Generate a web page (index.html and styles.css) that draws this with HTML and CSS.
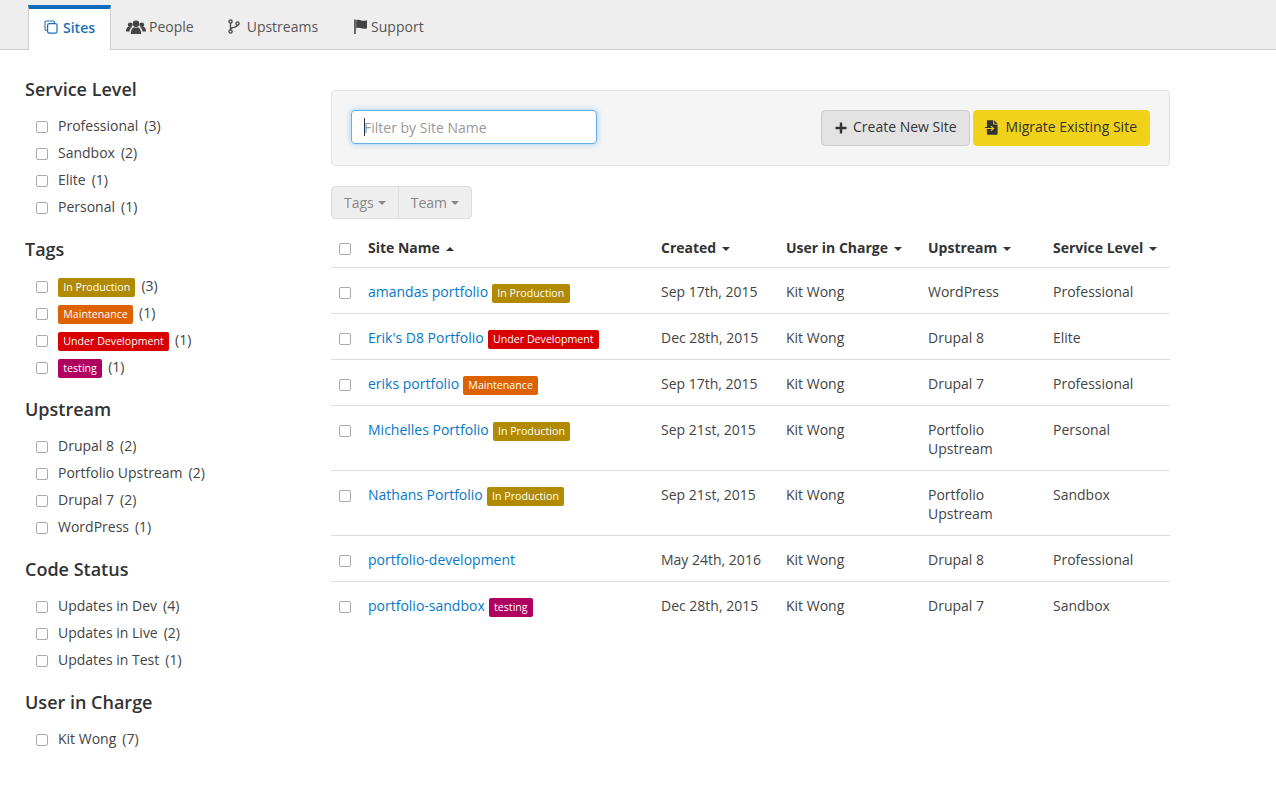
FILE: index.html
```html
<!DOCTYPE html>
<html lang="en">
<head>
<meta charset="utf-8">
<title>Sites</title>
<link rel="stylesheet" href="styles.css">
</head>
<body>
<nav class="tabs">
  <a class="tab active"><svg class="ico" viewBox="0 0 14 14" width="14" height="14"><path d="M3.500 10.500H2.500A1.500 1.500 0 0 1 1 9V2.500A1.500 1.500 0 0 1 2.500 1H9a1.500 1.500 0 0 1 1.500 1.500v1" fill="none" stroke="currentColor" stroke-width="1.100"/><rect x="3.600" y="3.600" width="9.400" height="9.600" rx="1.600" fill="none" stroke="currentColor" stroke-width="1.200"/></svg>Sites</a>
  <a class="tab people"><svg class="ico" viewBox="0 0 20 14" width="20" height="14"><circle cx="10" cy="3.800" r="3.300" fill="currentColor"/><path d="M4.800 14c0-4.500 1.700-6.300 3.500-6.800 1 .6 2.400.6 3.400 0 1.800.5 3.500 2.300 3.500 6.800z" fill="currentColor"/><circle cx="4.200" cy="4.800" r="2.400" fill="currentColor"/><circle cx="15.800" cy="4.800" r="2.400" fill="currentColor"/><path d="M0 11.500c0-3 1-4.300 2.500-4.700.9.500 2.100.5 3 .1l.5.300C4.500 8.300 3.700 9.600 3.500 11.500zM20 11.500c0-3-1-4.300-2.500-4.700-.9.500-2.100.5-3 .1l-.5.300c1.500 1.100 2.300 2.400 2.500 4.300z" fill="currentColor"/></svg>People</a>
  <a class="tab upstreams"><svg class="ico" viewBox="0 0 12 15" width="12" height="15"><circle cx="2.500" cy="2.500" r="1.600" fill="none" stroke="currentColor" stroke-width="1.300"/><circle cx="2.500" cy="12.500" r="1.600" fill="none" stroke="currentColor" stroke-width="1.300"/><circle cx="9.500" cy="4.500" r="1.600" fill="none" stroke="currentColor" stroke-width="1.300"/><path d="M2.500 4.100v6.800M9.500 6.100c0 2.800-7 1.900-7 4.200" fill="none" stroke="currentColor" stroke-width="1.300"/></svg>Upstreams</a>
  <a class="tab support"><svg class="ico" viewBox="0 0 14 15" width="14" height="15"><path d="M1 .5v14.500" stroke="currentColor" stroke-width="1.600" fill="none"/><path d="M2.200 1.200c2-.6 3.600-.4 5 .2s3.700.6 5.800-.2v8c-2.100.8-4.300.7-5.800.1s-3-.7-5-.1z" fill="currentColor"/></svg>Support</a>
</nav>
<div class="page">
  <aside class="side">
    <section class="group">
      <h3>Service Level</h3>
      <label class="opt"><input type="checkbox"><span>Professional</span><span class="n">(3)</span></label>
      <label class="opt"><input type="checkbox"><span>Sandbox</span><span class="n">(2)</span></label>
      <label class="opt"><input type="checkbox"><span>Elite</span><span class="n">(1)</span></label>
      <label class="opt"><input type="checkbox"><span>Personal</span><span class="n">(1)</span></label>
    </section>
    <section class="group">
      <h3>Tags</h3>
      <label class="opt"><input type="checkbox"><span class="tag prod">In Production</span><span class="n">(3)</span></label>
      <label class="opt"><input type="checkbox"><span class="tag maint">Maintenance</span><span class="n">(1)</span></label>
      <label class="opt"><input type="checkbox"><span class="tag dev">Under Development</span><span class="n">(1)</span></label>
      <label class="opt"><input type="checkbox"><span class="tag test">testing</span><span class="n">(1)</span></label>
    </section>
    <section class="group">
      <h3>Upstream</h3>
      <label class="opt"><input type="checkbox"><span>Drupal 8</span><span class="n">(2)</span></label>
      <label class="opt"><input type="checkbox"><span>Portfolio Upstream</span><span class="n">(2)</span></label>
      <label class="opt"><input type="checkbox"><span>Drupal 7</span><span class="n">(2)</span></label>
      <label class="opt"><input type="checkbox"><span>WordPress</span><span class="n">(1)</span></label>
    </section>
    <section class="group">
      <h3>Code Status</h3>
      <label class="opt"><input type="checkbox"><span>Updates in Dev</span><span class="n">(4)</span></label>
      <label class="opt"><input type="checkbox"><span>Updates in Live</span><span class="n">(2)</span></label>
      <label class="opt"><input type="checkbox"><span>Updates in Test</span><span class="n">(1)</span></label>
    </section>
    <section class="group">
      <h3>User in Charge</h3>
      <label class="opt"><input type="checkbox"><span>Kit Wong</span><span class="n">(7)</span></label>
    </section>
  </aside>
  <main class="main">
    <div class="well">
      <div class="filter"><span class="caret-bar"></span><span class="ph">Filter by Site Name</span></div>
      <div class="actions">
        <button class="btn create"><svg viewBox="0 0 12 12" width="12" height="12"><path d="M6 .5v11M.5 6h11" stroke="currentColor" stroke-width="2.400" fill="none"/></svg>Create New Site</button>
        <button class="btn migrate"><svg viewBox="0 0 14 15" width="14" height="15"><path d="M2 0h6.500v4.500H13V14a1 1 0 0 1-1 1H3a1 1 0 0 1-1-1zM9.500 0 13 3.500H9.500z" fill="currentColor"/><path d="M0 7.500h5.500M3.500 5.500 8 8 3.500 10.500" fill="none" stroke="currentColor" stroke-width="1.200"/><path d="M2 8.500h6M6 6l3 2.500L6 11" fill="none" stroke="#f0d21b" stroke-width="1.100"/></svg>Migrate Existing Site</button>
      </div>
    </div>
    <div class="btn-group">
      <span class="seg">Tags<i class="caret"></i></span><span class="seg">Team<i class="caret"></i></span>
    </div>
    <table class="grid">
      <colgroup><col class="c0"><col class="c1"><col class="c2"><col class="c3"><col class="c4"><col></colgroup>
      <thead>
        <tr>
          <th><input type="checkbox"></th>
          <th>Site Name<i class="caret up"></i></th>
          <th>Created<i class="caret"></i></th>
          <th>User in Charge<i class="caret"></i></th>
          <th>Upstream<i class="caret"></i></th>
          <th>Service Level<i class="caret"></i></th>
        </tr>
      </thead>
      <tbody>
        <tr><td><input type="checkbox"></td><td><a>amandas portfolio</a><span class="tag prod">In Production</span></td><td>Sep 17th, 2015</td><td>Kit Wong</td><td>WordPress</td><td>Professional</td></tr>
        <tr><td><input type="checkbox"></td><td><a>Erik's D8 Portfolio</a><span class="tag dev">Under Development</span></td><td>Dec 28th, 2015</td><td>Kit Wong</td><td>Drupal 8</td><td>Elite</td></tr>
        <tr><td><input type="checkbox"></td><td><a>eriks portfolio</a><span class="tag maint">Maintenance</span></td><td>Sep 17th, 2015</td><td>Kit Wong</td><td>Drupal 7</td><td>Professional</td></tr>
        <tr><td><input type="checkbox"></td><td><a>Michelles Portfolio</a><span class="tag prod">In Production</span></td><td>Sep 21st, 2015</td><td>Kit Wong</td><td>Portfolio Upstream</td><td>Personal</td></tr>
        <tr><td><input type="checkbox"></td><td><a>Nathans Portfolio</a><span class="tag prod">In Production</span></td><td>Sep 21st, 2015</td><td>Kit Wong</td><td>Portfolio Upstream</td><td>Sandbox</td></tr>
        <tr><td><input type="checkbox"></td><td><a>portfolio-development</a></td><td>May 24th, 2016</td><td>Kit Wong</td><td>Drupal 8</td><td>Professional</td></tr>
        <tr><td><input type="checkbox"></td><td><a>portfolio-sandbox</a><span class="tag test">testing</span></td><td>Dec 28th, 2015</td><td>Kit Wong</td><td>Drupal 7</td><td>Sandbox</td></tr>
      </tbody>
    </table>
  </main>
</div>
</body>
</html>
```
FILE: styles.css
```css
* { box-sizing: border-box; }
html, body { margin: 0; height: 100%; }
body { font-family: "Open Sans", sans-serif; font-size: 14px; line-height: 19px; color: #333; background: #fff; }

input[type=checkbox] { appearance: none; margin: 0; width: 12px; height: 12px; border: 1px solid #aaa; border-radius: 2px; background: #fff; flex: none; display: block; }

.tabs { display: flex; align-items: flex-end; height: 50px; padding-left: 28px; background: #eee; border-bottom: 1px solid #ccc; }
.tab { display: flex; align-items: center; height: 40px; padding: 0 18px 5px 16px; color: #555; }
.tab .ico { margin-right: 5px; color: #444; flex: none; }
.tab.active { height: 45px; width: 83px; margin-bottom: -1px; background: #fff; border: 1px solid #ccc; border-top: 4px solid #0b6bbd; border-bottom: 0; color: #1b6fb8; font-weight: 600; padding: 0 0 5px 15px; }
.tab.active .ico { color: #1b6fb8; }
.tab.people { padding-left: 15px; }
.tab.people .ico { margin-right: 3px; }
.tab.upstreams { padding-right: 20px; }
.tab.upstreams .ico { margin-right: 7px; }
.tab.support .ico { margin-right: 3px; }

.page { display: flex; align-items: flex-start; }
.side { width: 331px; flex: none; padding: 27px 0 0 25px; }
.group { margin-bottom: 17px; }
.group h3 { margin: 0 0 10px; font-size: 18px; line-height: 25px; font-weight: 600; color: #333; }
.opt { display: flex; align-items: center; height: 27px; color: #444; }
.opt input[type=checkbox] { margin: 3px 10px 0 11px; }
.opt .n { margin-left: 6px; }
.opt .tag { position: relative; top: 2px; }

.tag { display: inline-block; padding: 0 5.25px; height: 19px; line-height: 19px; font-size: 10.65px; border-radius: 2px; color: #fff; }
.tag.prod { background: #b28a00; }
.tag.maint { background: #dd6200; }
.tag.dev { background: #d80000; }
.tag.test { background: #b0005f; }

.main { width: 839px; flex: none; padding-top: 40px; }
.well { display: flex; align-items: flex-start; justify-content: space-between; height: 76px; padding: 19px 19px 0; background: #f5f5f5; border: 1px solid #e3e3e3; border-radius: 4px; }
.filter { display: flex; align-items: center; width: 246px; height: 34px; padding-left: 12px; background: #fff; border: 1px solid #66afe9; border-radius: 4px; box-shadow: 0 0 6px rgba(102,175,233,.6); }
.caret-bar { width: 1px; height: 18px; background: #333; flex: none; }
.ph { color: #999; margin-left: -1px; }
.actions { display: flex; gap: 3px; }
.btn { display: flex; align-items: center; height: 36px; padding: 0 12px 4px; font: inherit; color: #333; border-radius: 4px; border: 1px solid #ccc; white-space: nowrap; }
.btn svg { margin-top: 3px; }
.btn.create { background: #e3e3e3; width: 149px; padding-left: 13px; }
.btn.create svg { margin-right: 6px; }
.btn.migrate { background: #f0d21b; border-color: #f0d21b; width: 177px; padding-left: 11px; }
.btn.migrate svg { margin-right: 7px; }

.btn-group { display: flex; width: max-content; margin-top: 20px; height: 33px; background: #eee; border: 1px solid #ddd; border-radius: 4px; color: #888; }
.seg { display: flex; align-items: center; padding: 0 12px; }
.seg + .seg { border-left: 1px solid #ddd; }
.caret { display: inline-block; margin-left: 4px; width: 0; height: 0; border-left: 4px solid transparent; border-right: 4px solid transparent; border-top: 4px solid currentColor; vertical-align: middle; }
.caret.up { border-top: 0; border-bottom: 4px solid currentColor; }
th .caret { margin-left: 6px; }

.grid { width: 839px; margin-top: 14px; border-collapse: collapse; table-layout: fixed; }
.c0 { width: 37px; }
.c1 { width: 293px; }
.c2 { width: 125px; }
.c3 { width: 142px; }
.c4 { width: 125px; }
.grid th { height: 34px; padding: 0 0 10px; text-align: left; font-weight: 700; white-space: nowrap; border-bottom: 1px solid #ddd; vertical-align: bottom; }
.grid td { padding: 14px 0 12px; border-bottom: 1px solid #ddd; vertical-align: top; color: #444; }
.grid tbody tr:last-child td { border-bottom: 0; }
.grid th:first-child, .grid td:first-child { padding-left: 8px; }
.grid th:first-child input { margin-bottom: 2px; }
.grid td:first-child input { margin-top: 5px; }
.grid td:nth-child(5) { padding-right: 24px; }
.grid a { color: #0678c8; }
.grid .tag { margin-left: 4px; vertical-align: top; position: relative; top: 2px; }
```
